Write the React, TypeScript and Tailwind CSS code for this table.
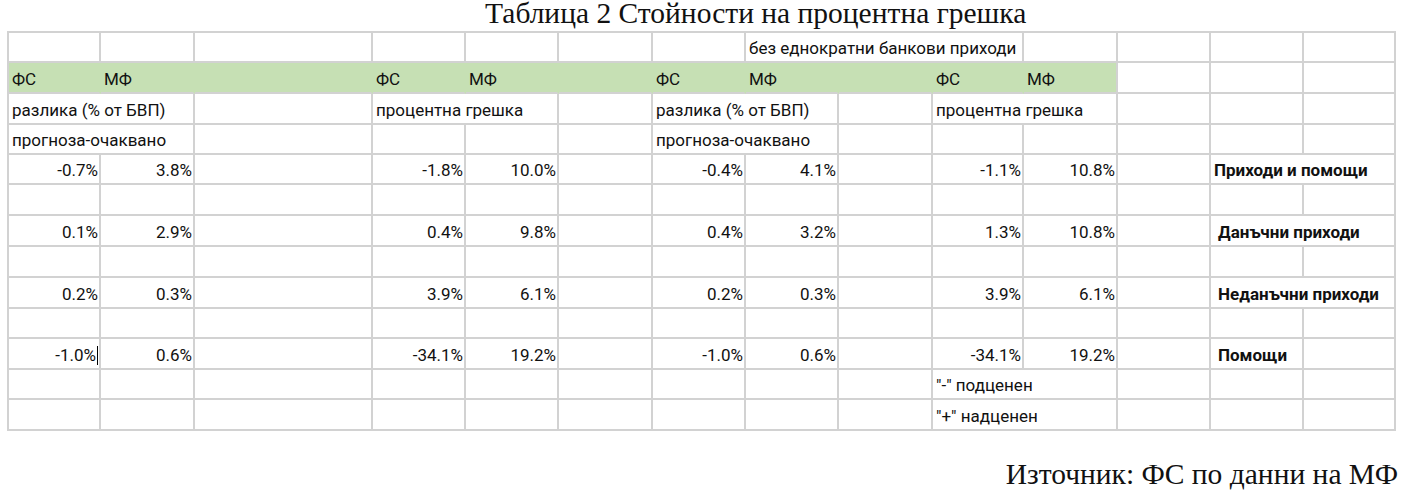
type Cell = {
  span?: number;
  text?: string;
  right?: boolean;
  bold?: boolean;
  green?: boolean;
  edge?: boolean;
  indent?: boolean;
  cursor?: boolean;
};

const e = (n: number): Cell[] => Array.from({ length: n }, () => ({}));

const values = (v: string[], label: Cell): Cell[] => [
  { text: v[0], right: true },
  { text: v[1], right: true },
  {},
  { text: v[2], right: true },
  { text: v[3], right: true },
  {},
  { text: v[4], right: true },
  { text: v[5], right: true },
  {},
  { text: v[6], right: true },
  { text: v[7], right: true },
  {},
  label,
];

const g = (text?: string, edge?: boolean): Cell => ({ text, green: true, edge });

const rows: Cell[][] = [
  [...e(7), { span: 3, text: "без еднократни банкови приходи" }, ...e(4)],
  [
    g("ФС"), g("МФ"), g(), g("ФС"), g("МФ"), g(), g("ФС"), g("МФ"), g(), g("ФС"), g("МФ", true),
    ...e(3),
  ],
  [
    { span: 2, text: "разлика (% от БВП)" }, {},
    { span: 2, text: "процентна грешка" }, {},
    { span: 2, text: "разлика (% от БВП)" }, {},
    { span: 2, text: "процентна грешка" }, ...e(3),
  ],
  [
    { span: 2, text: "прогноза-очаквано" }, ...e(4),
    { span: 2, text: "прогноза-очаквано" }, ...e(6),
  ],
  values(["-0.7%", "3.8%", "-1.8%", "10.0%", "-0.4%", "4.1%", "-1.1%", "10.8%"], {
    span: 2, text: "Приходи и помощи", bold: true,
  }),
  e(14),
  values(["0.1%", "2.9%", "0.4%", "9.8%", "0.4%", "3.2%", "1.3%", "10.8%"], {
    span: 2, text: "Данъчни приходи", bold: true, indent: true,
  }),
  e(14),
  values(["0.2%", "0.3%", "3.9%", "6.1%", "0.2%", "0.3%", "3.9%", "6.1%"], {
    span: 2, text: "Неданъчни приходи", bold: true, indent: true,
  }),
  e(14),
  [
    { text: "-1.0%", right: true, cursor: true },
    ...values(["", "0.6%", "-34.1%", "19.2%", "-1.0%", "0.6%", "-34.1%", "19.2%"], {
      text: "Помощи", bold: true, indent: true,
    }).slice(1),
    {},
  ],
  [...e(9), { span: 2, text: '"-" подценен' }, ...e(3)],
  [...e(9), { span: 2, text: '"+" надценен' }, ...e(3)],
];

const spanClass: Record<number, string> = { 1: "col-span-1", 2: "col-span-2", 3: "col-span-3" };

function GridCell({ c }: { c: Cell }) {
  const border = c.green && !c.edge ? "border-r-[#c6e0b4]" : "border-r-[#d2d2d2]";
  return (
    <div
      className={`${spanClass[c.span ?? 1]} flex items-center overflow-visible whitespace-nowrap border-r-2 border-b-2 border-b-[#d2d2d2] ${border} ${
        c.green ? "bg-[#c6e0b4]" : "bg-white"
      } ${c.right ? "justify-end pr-[1px]" : c.indent ? "pl-[7px]" : "pl-[3px]"} ${
        c.bold ? "font-bold" : ""
      } pt-[3px]`}
    >
      {c.text}
      {c.cursor && <span className="ml-[1px] inline-block h-[19px] w-px bg-black" />}
    </div>
  );
}

export default function App() {
  return (
    <div className="h-[497px] w-[1419px] bg-white text-[#111]">
      <div className="flex h-[31px] items-start pl-[485px] font-['Liberation_Serif',serif] text-[29.5px] leading-[26px]">
        Таблица 2 Стойности на процентна грешка
      </div>
      <div className="ml-[7px] grid w-[1389px] grid-cols-[92px_94px_178px_93px_93px_94px_93px_93px_94px_91px_94px_93px_93px_92px] grid-rows-[30px_31px_31px_30px_30px_31px_31px_31px_31px_30px_31px_30px_31px] border-t-2 border-l-2 border-[#d2d2d2] font-['Roboto',sans-serif] text-[17px] leading-none">
        {rows.map((r, i) => r.map((c, j) => <GridCell key={`${i}-${j}`} c={c} />))}
      </div>
      <div className="flex justify-end pt-[30px] pr-[21px] font-['Liberation_Serif',serif] text-[29.5px] leading-[26px]">
        Източник: ФС по данни на МФ
      </div>
    </div>
  );
}
